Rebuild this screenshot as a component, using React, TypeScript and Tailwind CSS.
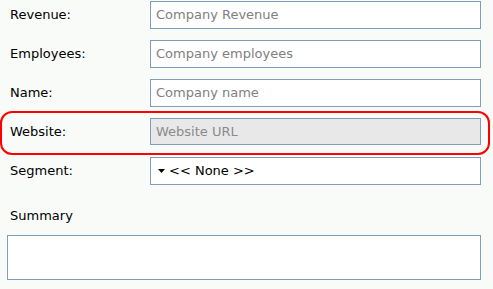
export default function App() {
  const font = { fontFamily: '"DejaVu Sans", Verdana, sans-serif' };
  const fields = [
    { label: 'Revenue:', placeholder: 'Company Revenue' },
    { label: 'Employees:', placeholder: 'Company employees' },
    { label: 'Name:', placeholder: 'Company name' },
  ];

  return (
    <div className="w-[493px] h-[289px] bg-[#f9fbf9] text-[13px] text-black overflow-hidden pt-[1px]" style={font}>
      <div className="flex flex-col gap-[11px]">
        {fields.map((f) => (
          <div key={f.label} className="flex items-center h-[28px]">
            <div className="w-[150px] pl-[10px]">{f.label}</div>
            <div className="w-[331px] h-[28px] border border-[#7f9db9] bg-white flex items-center px-[5px] text-[#808080]">
              {f.placeholder}
            </div>
          </div>
        ))}

        <div className="relative flex items-center h-[27px]">
          <div className="absolute left-[0px] top-[-7px] w-[490px] h-[44px] border-2 border-[#ff0000] rounded-[12px]" />
          <div className="w-[150px] pl-[10px]">Website:</div>
          <div className="w-[331px] h-[27px] border border-[#7f9db9] bg-[#e8e8e8] flex items-center px-[5px] text-[#8a8a8a]">
            Website URL
          </div>
        </div>

        <div className="flex items-center h-[28px] mt-[1px]">
          <div className="w-[150px] pl-[10px]">Segment:</div>
          <div className="w-[331px] h-[28px] border border-[#7f9db9] bg-white flex items-center pl-[7px] gap-[4px]">
            <svg width="7" height="4" viewBox="0 0 7 4">
              <path d="M0 0 H7 L3.5 4 Z" fill="#000" />
            </svg>
            <span>&lt;&lt; None &gt;&gt;</span>
          </div>
        </div>
      </div>

      <div className="pl-[10px] mt-[23px] leading-[16px]">Summary</div>
      <div className="ml-[7px] mt-[11px] w-[474px] h-[45px] border border-[#7f9db9] bg-white" />
    </div>
  );
}
